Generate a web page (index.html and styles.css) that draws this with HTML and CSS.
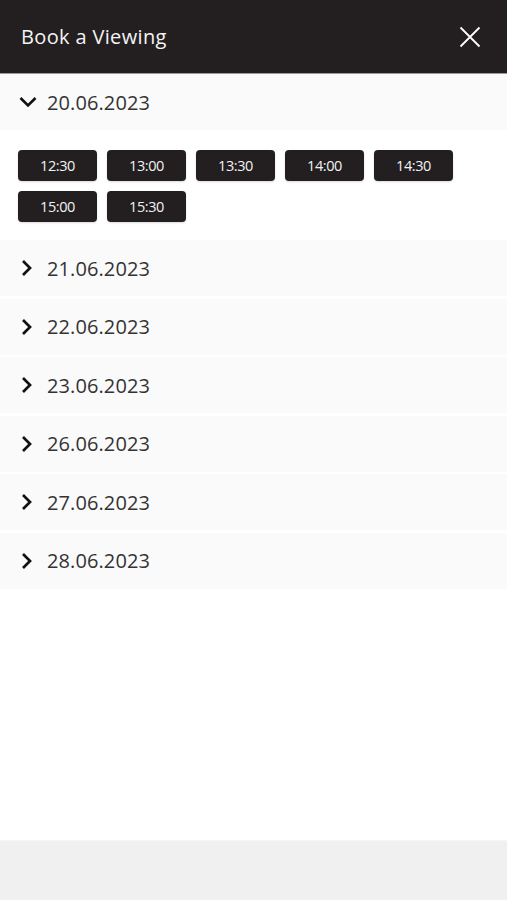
FILE: index.html
```html
<!DOCTYPE html>
<html lang="en">
<head>
<meta charset="utf-8">
<title>Book a Viewing</title>
<link rel="stylesheet" href="styles.css">
</head>
<body>
<div class="page">
  <header class="topbar">
    <h1 class="title">Book a Viewing</h1>
    <button class="close" aria-label="Close">
      <svg width="22" height="22" viewBox="0 0 22 22"><path d="M1.5 1.5 L20.5 20.5 M20.5 1.5 L1.5 20.5" stroke="#fff" stroke-width="1.8" fill="none"/></svg>
    </button>
  </header>
  <main class="list">
    <section class="day open">
      <div class="day-head">
        <svg class="chev" width="18" height="12" viewBox="0 0 18 12"><path d="M1.5 2 L9 9.5 L16.5 2" stroke="#111" stroke-width="2.6" fill="none"/></svg>
        <span class="date">20.06.2023</span>
      </div>
      <div class="slots">
        <button class="slot">12:30</button>
        <button class="slot">13:00</button>
        <button class="slot">13:30</button>
        <button class="slot">14:00</button>
        <button class="slot">14:30</button>
        <button class="slot">15:00</button>
        <button class="slot">15:30</button>
      </div>
    </section>
    <div class="closed-days">
      <div class="day-head"><svg class="chev" width="18" height="16" viewBox="0 0 18 16"><path d="M4 1 L11 8 L4 15" stroke="#111" stroke-width="2.7" fill="none"/></svg><span class="date">21.06.2023</span></div>
      <div class="day-head"><svg class="chev" width="18" height="16" viewBox="0 0 18 16"><path d="M4 1 L11 8 L4 15" stroke="#111" stroke-width="2.7" fill="none"/></svg><span class="date">22.06.2023</span></div>
      <div class="day-head"><svg class="chev" width="18" height="16" viewBox="0 0 18 16"><path d="M4 1 L11 8 L4 15" stroke="#111" stroke-width="2.7" fill="none"/></svg><span class="date">23.06.2023</span></div>
      <div class="day-head"><svg class="chev" width="18" height="16" viewBox="0 0 18 16"><path d="M4 1 L11 8 L4 15" stroke="#111" stroke-width="2.7" fill="none"/></svg><span class="date">26.06.2023</span></div>
      <div class="day-head"><svg class="chev" width="18" height="16" viewBox="0 0 18 16"><path d="M4 1 L11 8 L4 15" stroke="#111" stroke-width="2.7" fill="none"/></svg><span class="date">27.06.2023</span></div>
      <div class="day-head"><svg class="chev" width="18" height="16" viewBox="0 0 18 16"><path d="M4 1 L11 8 L4 15" stroke="#111" stroke-width="2.7" fill="none"/></svg><span class="date">28.06.2023</span></div>
    </div>
  </main>
  <footer class="bottom"></footer>
</div>
</body>
</html>
```

FILE: styles.css
```css
* { box-sizing: border-box; }
html, body { margin: 0; padding: 0; background: #fff; }
body { font-family: "Open Sans", "Liberation Sans", sans-serif; }
.page { height: 900px; display: flex; flex-direction: column; }
.topbar {
  height: 74px;
  background: #231f20;
  display: flex;
  align-items: center;
  justify-content: space-between;
  padding: 0 26px 0 21px;
  border-bottom: 1px solid #9a9a9a;
}
.title { margin: 0; color: #f4f4f4; font-size: 20px; font-weight: 400; letter-spacing: 0.35px; }
.close { background: none; border: 0; padding: 0; width: 22px; height: 22px; display: flex; cursor: pointer; }
.list { flex: 1; }
.day-head {
  height: 56px;
  background: #fafafa;
  display: flex;
  align-items: center;
  padding-left: 19px;
  gap: 10px;
}
.chev { flex: none; }
.date { color: #333; font-size: 20px; letter-spacing: 0.1px; }
.slots {
  display: flex;
  flex-wrap: wrap;
  gap: 10px;
  padding: 20px 18px 18px;
  width: 480px;
}
.slot {
  width: 79px;
  height: 31px;
  background: #231f20;
  color: #f2f2f2;
  border: 0;
  border-radius: 4px;
  font-family: inherit;
  font-size: 14.5px;
  font-weight: 500;
  letter-spacing: -0.4px;
  padding: 0;
  box-shadow: 0 1px 2px rgba(0,0,0,0.15);
}
.closed-days { display: flex; flex-direction: column; gap: 2.6px; }
.bottom {
  height: 60px;
  background: #f0f0f0;
  border-top: 1px solid #f6f6f6;
}
```
